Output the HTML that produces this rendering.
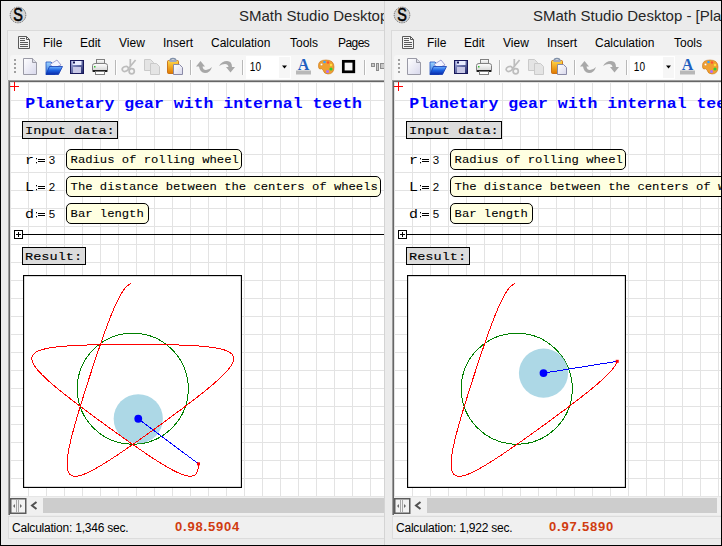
<!DOCTYPE html>
<html><head><meta charset="utf-8"><style>
*{margin:0;padding:0;box-sizing:border-box}
html,body{width:722px;height:546px;overflow:hidden;background:#ebebeb}
body{position:relative;font-family:"Liberation Sans",sans-serif}
.frame{position:absolute;left:0;top:0;width:722px;height:546px;border:1px solid #000}
.win{position:absolute;top:0;height:546px;overflow:hidden;background:#ebebeb}
.sepv{position:absolute;left:0;top:0;width:1px;height:546px;background:#d4d4d4}
.logo{position:absolute;left:8px;top:5px;width:20px;height:20px}
.logo svg{position:absolute;left:0;top:0}
.title{position:absolute;top:7px;font-size:15px;color:#262626;white-space:nowrap}
.menubar{position:absolute;left:7px;top:30px;right:0;height:50px;background:#f0f0f0;border-top:1px solid #dadada;border-left:1px solid #dadada}
.menu span{position:absolute;top:36px;font-size:12px;color:#000}
.toolbar{position:absolute;left:10px;top:55px;right:0;height:25px;background:#f6f6f6;border-radius:3px 0 0 0}
.bl1{position:absolute;left:8px;top:80px;width:1px;height:435px;background:#9c9c9c}
.bl2{position:absolute;left:9px;top:81px;width:1px;height:434px;background:#666}
.bt1{position:absolute;left:8px;top:80px;right:0;height:1px;background:#9c9c9c}
.bt2{position:absolute;left:9px;top:81px;right:0;height:1px;background:#666}
.doc{position:absolute;left:10px;top:82px;right:0;height:414px;background:#fff;overflow:hidden}
.dc{position:absolute;left:-10px;top:-82px;width:800px;height:700px}
.grid{position:absolute;left:0;top:0;width:800px;height:700px;background-image:linear-gradient(to right,#e3e3e3 1px,transparent 1px),linear-gradient(to bottom,#e3e3e3 1px,transparent 1px);background-size:18px 18px;background-position:10px 10px}
.h1{position:absolute;left:25.3px;top:95.7px;font-family:"Liberation Mono",monospace;font-weight:bold;font-size:16.5px;line-height:16.5px;color:#0000ff;white-space:nowrap;transform:scaleY(0.85);transform-origin:0 12.3px}
.lbl{position:absolute;left:22px;height:18px;background:#dcdcdc;border:1px solid #000}
.lt{position:absolute;left:25px;font-family:"Liberation Mono",monospace;font-size:13.6px;line-height:13.6px;white-space:nowrap;transform:scaleY(0.82);transform-origin:0 10.2px;-webkit-text-stroke:0.12px #000}
.vn{position:absolute;left:25px;font-family:"Liberation Mono",monospace;font-size:13.33px;line-height:13.33px;transform:scale(1.12,0.93);transform-origin:0 10px;white-space:nowrap}
.vc{position:absolute;left:36px;width:1px;height:5px;border-top:1px solid #000;border-bottom:1px solid #000}
.ve{position:absolute;left:38px;width:7px;height:3.5px;border-top:1.2px solid #000;border-bottom:1.2px solid #000}
.vv{position:absolute;left:48.8px;font-family:"Liberation Sans",sans-serif;font-size:11.5px;line-height:11px}
.cmt{position:absolute;left:66px;height:21px;background:#ffffe1;border:1px solid #000;border-radius:5px}
.ct{position:absolute;left:70.6px;font-family:"Liberation Mono",monospace;font-size:12.2px;line-height:12.2px;white-space:nowrap;transform:scaleY(0.92);transform-origin:0 9.15px;-webkit-text-stroke:0.08px #000}
.sepline{position:absolute;left:23px;width:700px;top:234px;height:1px;background:#000}
.hscroll{position:absolute;left:10px;top:496px;right:0;height:19px;background:#f0f0f0;border-top:1px solid #e6e6e6}
.track{position:absolute;left:43px;top:498px;height:15px;background:#cdcdcd}
.status{position:absolute;left:8px;top:516px;right:0;height:23px;background:#f0f0f0;border-top:1px solid #dcdcdc;border-left:1px solid #dcdcdc;border-bottom:1px solid #dcdcdc}
.calc{position:absolute;left:12px;top:521px;font-size:12px;letter-spacing:-0.22px;white-space:nowrap;color:#000}
.ver{position:absolute;top:519px;font-weight:bold;color:#d03c10;font-size:13px;letter-spacing:0.8px;white-space:nowrap}
</style></head><body>

<div class="win" style="left:0px;width:384px">
  <div class="logo"><svg width="20" height="20"><circle cx="10" cy="10" r="7.8" fill="#d6d6d6" stroke="#6a6a6a" stroke-width="1" stroke-dasharray="1.4 0.9"/><text x="0" y="0" transform="translate(10,16.1) scale(0.82,1)" text-anchor="middle" font-family="Liberation Sans" font-size="17.5" fill="#000" stroke="#000" stroke-width="0.6">S</text></svg></div>
  <div class="title" style="left:239px">SMath Studio Desktop - [Planetary gear with internal teeth]</div>
  <div class="menubar"></div>
  <svg width="14" height="15" style="position:absolute;left:17px;top:35px;z-index:1">
<path d="M1.5,1.5 H9.5 L12.5,4.5 V13.5 H1.5 Z" fill="#f4f4f4" stroke="#5a5a5a"/>
<path d="M9.5,1.5 V4.5 H12.5" fill="none" stroke="#5a5a5a"/>
<g fill="#5a5a5a"><rect x="3" y="3" width="5" height="1"/><rect x="3" y="5" width="5" height="1"/><rect x="3" y="7" width="8" height="1"/><rect x="3" y="9" width="8" height="1"/><rect x="3" y="11" width="8" height="1"/></g>
</svg>
  <div class="menu"><span style="left:43px">File</span><span style="left:80px">Edit</span><span style="left:119px">View</span><span style="left:163px">Insert</span><span style="left:211px">Calculation</span><span style="left:290px">Tools</span><span style="left:338px;letter-spacing:-0.55px">Pages</span></div>
  <div class="toolbar"></div>
  <svg class="tb" width="384" height="26" style="position:absolute;left:0;top:55px">
<defs>
<linearGradient id="pg" x1="0" y1="0" x2="1" y2="1"><stop offset="0" stop-color="#ffffff"/><stop offset="1" stop-color="#d8d8ec"/></linearGradient>
<linearGradient id="fb" x1="0" y1="0" x2="0" y2="1"><stop offset="0" stop-color="#6fb0ff"/><stop offset="0.5" stop-color="#1a5fe0"/><stop offset="1" stop-color="#0a2aa8"/></linearGradient>
<linearGradient id="fl" x1="0" y1="0" x2="0" y2="1"><stop offset="0" stop-color="#9dd4ff"/><stop offset="1" stop-color="#2a6ad8"/></linearGradient>
<linearGradient id="sv" x1="0" y1="0" x2="1" y2="1"><stop offset="0" stop-color="#a8b0e0"/><stop offset="1" stop-color="#20286a"/></linearGradient>
<linearGradient id="cb" x1="0" y1="0" x2="0" y2="1"><stop offset="0" stop-color="#ffd84a"/><stop offset="1" stop-color="#e07800"/></linearGradient>
<linearGradient id="pr" x1="0" y1="0" x2="0" y2="1"><stop offset="0" stop-color="#ffffff"/><stop offset="1" stop-color="#d0d0d0"/></linearGradient>
</defs>
<!-- grip -->
<g fill="#a0a0a0"><rect x="14" y="4" width="2" height="2"/><rect x="14" y="8" width="2" height="2"/><rect x="14" y="12" width="2" height="2"/><rect x="14" y="16" width="2" height="2"/></g>
<!-- new -->
<path d="M23.5,3.5 H32.5 L36.5,7.5 V19.5 H23.5 Z" fill="url(#pg)" stroke="#9a9aa6"/>
<path d="M32.5,3.5 V7.5 H36.5" fill="#dcdce6" stroke="#9a9aa6"/>
<!-- open -->
<path d="M46,7 H51 L52.5,8.5 H55 V19.5 H46 Z" fill="url(#fl)" stroke="#2050c0" stroke-width="0.8"/>
<path d="M50,9.5 L57,5 L61,10 L54,13 Z" fill="#f4f4ff" stroke="#8080c0" stroke-width="0.7"/>
<path d="M46,19.5 L49.5,11.5 H62.5 L58.5,19.5 Z" fill="url(#fb)" stroke="#1038b0" stroke-width="0.8"/>
<!-- save -->
<rect x="70.5" y="5.5" width="13" height="13" fill="url(#sv)" stroke="#18185a"/>
<rect x="72.5" y="6" width="9" height="4" fill="#e8ecff"/>
<rect x="73" y="12" width="8" height="6" fill="#c8c8e6"/>
<rect x="73" y="6.5" width="2" height="2" fill="#18185a"/>
<!-- print -->
<rect x="96.5" y="4.5" width="8" height="5" fill="url(#pr)" stroke="#808080"/>
<path d="M92.5,10.5 Q92.5,8.5 95,8.5 H105 Q107.5,8.5 107.5,10.5 V16.5 H92.5 Z" fill="url(#pr)" stroke="#808080"/>
<rect x="93" y="15" width="14" height="2" fill="#202020"/>
<rect x="95.5" y="16.5" width="9" height="3" fill="#fff" stroke="#808080"/>
<rect x="94" y="11" width="1.5" height="1.5" fill="#30c030"/>
<!-- sep -->
<rect x="115" y="5" width="1" height="15" fill="#b8b8b8"/><rect x="116" y="5" width="1" height="15" fill="#fff"/>
<!-- cut -->
<g fill="none" stroke="#bdbdbd" stroke-width="1.7">
<ellipse cx="125.3" cy="13.9" rx="3.2" ry="2.3" transform="rotate(-25 125.3 13.9)"/><circle cx="131.7" cy="16.3" r="2.6"/>
<path d="M130.3,4 V12.5 M135.6,5 L128.5,13.5"/></g>
<!-- copy -->
<path d="M144.5,4.5 H150.5 L153.5,7.5 V15.5 H144.5 Z" fill="#e4e4e4" stroke="#cacaca"/>
<path d="M150.5,8.5 H156.5 L159.5,11.5 V19.5 H150.5 Z" fill="#e4e4e4" stroke="#cacaca"/>
<!-- paste -->
<rect x="167.5" y="5.5" width="11" height="13" rx="1" fill="url(#cb)" stroke="#c06000" stroke-width="0.8"/>
<path d="M170,6 Q170,3.5 173,3.5 Q176,3.5 176,6" fill="none" stroke="#8090a8" stroke-width="1.3"/>
<rect x="169.5" y="5" width="7" height="2" fill="#a0a8c0"/>
<path d="M173.5,9.5 H179.5 L182.5,12.5 V19.5 H173.5 Z" fill="url(#pg)" stroke="#8a8aa6"/>
<!-- sep -->
<rect x="190" y="5" width="1" height="15" fill="#b8b8b8"/><rect x="191" y="5" width="1" height="15" fill="#fff"/>
<!-- undo -->
<path d="M196,11.5 L200.5,6 L205,11.5 H202.5 Q203,15 206,15 Q209,15 212,12 Q210,18 205,18 Q200,18 199,11.5 Z" fill="#a8a8a8"/>
<!-- redo -->
<path d="M219,11 Q222,6 227,6 Q232,6 232,12 H235 L230.5,17.5 L226,12 H228.5 Q228,9 225,9 Q222,9 219,11 Z" fill="#a8a8a8"/>
<!-- sep -->
<rect x="242" y="5" width="1" height="15" fill="#b8b8b8"/><rect x="243" y="5" width="1" height="15" fill="#fff"/>
<!-- combo -->
<rect x="246" y="1" width="45" height="23" fill="#ffffff"/>
<rect x="279" y="2" width="11" height="21" fill="#f6f6f6"/>
<path d="M282,10.5 H287 L284.5,13.5 Z" fill="#000"/>
<text x="249.8" y="15.7" font-family="Liberation Sans" font-size="12.5" textLength="11.2" lengthAdjust="spacingAndGlyphs" fill="#000">10</text>
<!-- A -->
<rect x="296" y="15.5" width="15" height="4" fill="#b8b8b8"/>
<text x="303.5" y="15.2" text-anchor="middle" font-family="Liberation Serif" font-weight="bold" font-size="16" fill="#1f5fbf">A</text>
<!-- palette -->
<path d="M318.5,11 Q318,5 326,5 Q334,5 334,12 Q334,19 328,19 Q324,19 323,15 Q322,13 320,14 Q318.5,14 318.5,11 Z" fill="#f0a030" stroke="#c87010" stroke-width="0.6"/>
<circle cx="321.5" cy="9.5" r="1.2" fill="#fff" stroke="#c87010" stroke-width="0.4"/>
<circle cx="324.5" cy="7" r="1.3" fill="#3aa0ff"/><circle cx="328" cy="7.5" r="1.2" fill="#ff5030"/>
<circle cx="331" cy="10" r="1.2" fill="#ffe040"/><circle cx="331" cy="14" r="1.6" fill="#30d030"/><circle cx="327.5" cy="16.5" r="1.5" fill="#b070ff"/>
<!-- box -->
<rect x="343.3" y="6.3" width="10.5" height="10.5" fill="none" stroke="#000" stroke-width="2.7"/>
<!-- sep -->
<rect x="364" y="5" width="1" height="15" fill="#b8b8b8"/><rect x="365" y="5" width="1" height="15" fill="#fff"/>
<!-- align -->
<rect x="371.5" y="8.5" width="3" height="3" fill="#c8c8c8" stroke="#8c8c8c"/>
<rect x="376.5" y="8.5" width="2" height="7" fill="#c8c8c8" stroke="#8c8c8c"/>
<rect x="380.5" y="8.5" width="4" height="5" fill="#c8c8c8" stroke="#8c8c8c"/>
</svg>
  <div class="bl1"></div><div class="bl2"></div><div class="bt1"></div><div class="bt2"></div>
  <div class="doc"><div class="dc">
    <div class="grid"></div>
    <svg style="position:absolute;left:10px;top:82px" width="9" height="9"><rect x="0" y="4" width="9" height="1" fill="#f00"/><rect x="4" y="0" width="1" height="9" fill="#f00"/></svg>
    <div class="h1">Planetary gear with internal teeth</div>
    <div class="lbl" style="top:121px;width:96px"></div><div class="lt" style="top:124px">Input data:</div>
    <div class="vn" style="top:154px">r</div><svg style="position:absolute;left:35px;top:157px" width="11" height="8"><rect x="1" y="1" width="1" height="1.3" fill="#000"/><rect x="1" y="5" width="1" height="1.3" fill="#000"/><rect x="3" y="2" width="7" height="1" fill="#000"/><rect x="3" y="4" width="7" height="1" fill="#000"/></svg><div class="vv" style="top:155px">3</div>
    <div class="cmt" style="top:149px;width:176px"></div><div class="ct" style="top:153.80px">Radius of rolling wheel</div>
    <div class="vn" style="top:181px">L</div><svg style="position:absolute;left:35px;top:184px" width="11" height="8"><rect x="1" y="1" width="1" height="1.3" fill="#000"/><rect x="1" y="5" width="1" height="1.3" fill="#000"/><rect x="3" y="2" width="7" height="1" fill="#000"/><rect x="3" y="4" width="7" height="1" fill="#000"/></svg><div class="vv" style="top:182px">2</div>
    <div class="cmt" style="top:176px;width:315px"></div><div class="ct" style="top:180.80px">The distance between the centers of wheels</div>
    <div class="vn" style="top:208px">d</div><svg style="position:absolute;left:35px;top:211px" width="11" height="8"><rect x="1" y="1" width="1" height="1.3" fill="#000"/><rect x="1" y="5" width="1" height="1.3" fill="#000"/><rect x="3" y="2" width="7" height="1" fill="#000"/><rect x="3" y="4" width="7" height="1" fill="#000"/></svg><div class="vv" style="top:209px">5</div>
    <div class="cmt" style="top:203px;width:83px"></div><div class="ct" style="top:207.80px">Bar length</div>
    <svg style="position:absolute;left:14px;top:230px" width="9" height="9"><rect x="0.5" y="0.5" width="8" height="8" fill="#fff" stroke="#000"/><rect x="2" y="4" width="5" height="1" fill="#000"/><rect x="4" y="2" width="1" height="5" fill="#000"/></svg>
    <div class="sepline"></div>
    <div class="lbl" style="top:247px;width:64px"></div><div class="lt" style="top:250px">Result:</div>
    <svg width="219" height="213" style="position:absolute;left:23px;top:275px">
<rect x="0.5" y="0.5" width="218" height="212" fill="#fff" stroke="#000" stroke-width="1.3"/>
<circle cx="109.75" cy="113.70" r="55.5" fill="none" stroke="#008000" stroke-width="1" shape-rendering="crispEdges"/>
<circle cx="115.27" cy="143.74" r="24.6" fill="#add8e6"/>
<path d="M108.02,8.75 L107.33,8.99 L106.64,9.30 L105.94,9.68 L105.24,10.15 L104.54,10.69 L103.84,11.31 L103.14,12.00 L102.43,12.77 L101.72,13.61 L101.00,14.53 L100.29,15.51 L99.56,16.57 L98.84,17.71 L98.10,18.91 L97.37,20.18 L96.62,21.51 L95.88,22.92 L95.12,24.39 L94.36,25.92 L93.60,27.52 L92.83,29.18 L92.05,30.90 L91.27,32.67 L90.48,34.51 L89.69,36.40 L88.89,38.34 L88.08,40.34 L87.27,42.39 L86.45,44.48 L85.63,46.63 L84.80,48.82 L83.97,51.05 L83.13,53.32 L82.28,55.64 L81.43,57.99 L80.58,60.37 L79.72,62.80 L78.86,65.25 L77.99,67.73 L77.12,70.24 L76.25,72.78 L75.37,75.34 L74.50,77.92 L73.62,80.52 L72.74,83.14 L71.86,85.77 L70.98,88.41 L70.10,91.07 L69.22,93.74 L68.35,96.41 L67.47,99.08 L66.60,101.76 L65.74,104.44 L64.88,107.12 L64.02,109.79 L63.17,112.45 L62.33,115.11 L61.49,117.76 L60.66,120.39 L59.85,123.01 L59.04,125.62 L58.24,128.20 L57.46,130.77 L56.68,133.31 L55.93,135.83 L55.18,138.32 L54.45,140.78 L53.74,143.21 L53.05,145.62 L52.37,147.98 L51.71,150.32 L51.08,152.61 L50.46,154.87 L49.87,157.09 L49.30,159.27 L48.75,161.40 L48.23,163.49 L47.73,165.53 L47.26,167.53 L46.82,169.48 L46.41,171.37 L46.03,173.22 L45.68,175.01 L45.36,176.76 L45.07,178.44 L44.81,180.07 L44.59,181.65 L44.41,183.17 L44.26,184.63 L44.14,186.03 L44.07,187.37 L44.03,188.66 L44.03,189.88 L44.07,191.04 L44.15,192.14 L44.27,193.18 L44.43,194.15 L44.64,195.06 L44.89,195.91 L45.18,196.70 L45.51,197.42 L45.89,198.08 L46.31,198.67 L46.78,199.21 L47.29,199.68 L47.85,200.08 L48.46,200.43 L49.11,200.71 L49.81,200.92 L50.55,201.08 L51.34,201.17 L52.18,201.21 L53.06,201.18 L53.99,201.09 L54.97,200.95 L55.99,200.74 L57.06,200.48 L58.18,200.16 L59.34,199.78 L60.55,199.35 L61.80,198.86 L63.10,198.32 L64.44,197.73 L65.83,197.08 L67.26,196.38 L68.73,195.64 L70.25,194.84 L71.81,194.00 L73.41,193.11 L75.04,192.18 L76.72,191.20 L78.44,190.18 L80.19,189.11 L81.98,188.01 L83.81,186.87 L85.67,185.69 L87.56,184.48 L89.49,183.23 L91.44,181.94 L93.43,180.63 L95.45,179.28 L97.49,177.91 L99.56,176.50 L101.65,175.07 L103.77,173.62 L105.91,172.14 L108.07,170.64 L110.25,169.12 L112.45,167.58 L114.66,166.03 L116.88,164.45 L119.12,162.87 L121.37,161.27 L123.63,159.65 L125.90,158.03 L128.17,156.40 L130.45,154.76 L132.73,153.11 L135.01,151.46 L137.29,149.80 L139.56,148.15 L141.83,146.49 L144.09,144.83 L146.35,143.17 L148.59,141.52 L150.83,139.87 L153.04,138.22 L155.24,136.58 L157.43,134.95 L159.59,133.33 L161.74,131.72 L163.85,130.11 L165.95,128.52 L168.01,126.94 L170.05,125.38 L172.06,123.83 L174.03,122.29 L175.97,120.78 L177.87,119.28 L179.74,117.79 L181.56,116.33 L183.35,114.88 L185.09,113.46 L186.78,112.05 L188.43,110.67 L190.04,109.31 L191.59,107.97 L193.09,106.65 L194.54,105.36 L195.93,104.09 L197.27,102.84 L198.56,101.62 L199.78,100.43 L200.95,99.26 L202.05,98.11 L203.09,96.99 L204.07,95.90 L204.99,94.83 L205.84,93.79 L206.63,92.77 L207.34,91.79 L207.99,90.82 L208.57,89.89 L209.09,88.98 L209.53,88.09 L209.90,87.23 L210.20,86.40 L210.42,85.59 L210.58,84.81 L210.66,84.06 L210.67,83.33 L210.60,82.62 L210.46,81.94 L210.25,81.28 L209.96,80.65 L209.60,80.04 L209.16,79.45 L208.65,78.89 L208.07,78.35 L207.41,77.83 L206.68,77.33 L205.88,76.86 L205.00,76.40 L204.05,75.96 L203.03,75.55 L201.94,75.15 L200.78,74.77 L199.54,74.41 L198.24,74.07 L196.88,73.74 L195.44,73.44 L193.94,73.14 L192.37,72.87 L190.74,72.60 L189.05,72.36 L187.29,72.12 L185.48,71.90 L183.60,71.70 L181.67,71.50 L179.68,71.32 L177.64,71.15 L175.54,70.99 L173.39,70.84 L171.20,70.70 L168.95,70.57 L166.66,70.45 L164.32,70.34 L161.94,70.23 L159.52,70.14 L157.06,70.05 L154.56,69.97 L152.02,69.89 L149.45,69.82 L146.85,69.76 L144.23,69.70 L141.57,69.65 L138.89,69.61 L136.18,69.57 L133.46,69.53 L130.71,69.50 L127.95,69.47 L125.18,69.45 L122.39,69.43 L119.59,69.41 L116.78,69.40 L113.97,69.40 L111.16,69.39 L108.34,69.39 L105.53,69.40 L102.72,69.40 L99.91,69.41 L97.11,69.43 L94.32,69.45 L91.55,69.47 L88.79,69.50 L86.04,69.53 L83.32,69.57 L80.61,69.61 L77.93,69.65 L75.27,69.70 L72.65,69.76 L70.05,69.82 L67.48,69.89 L64.94,69.97 L62.44,70.05 L59.98,70.14 L57.56,70.23 L55.18,70.34 L52.84,70.45 L50.55,70.57 L48.30,70.70 L46.11,70.84 L43.96,70.99 L41.86,71.15 L39.82,71.32 L37.83,71.50 L35.90,71.70 L34.02,71.90 L32.21,72.12 L30.45,72.36 L28.76,72.60 L27.13,72.87 L25.56,73.14 L24.06,73.44 L22.62,73.74 L21.26,74.07 L19.96,74.41 L18.72,74.77 L17.56,75.15 L16.47,75.55 L15.45,75.96 L14.50,76.40 L13.62,76.86 L12.82,77.33 L12.09,77.83 L11.43,78.35 L10.85,78.89 L10.34,79.45 L9.90,80.04 L9.54,80.65 L9.25,81.28 L9.04,81.94 L8.90,82.62 L8.83,83.33 L8.84,84.06 L8.92,84.81 L9.08,85.59 L9.30,86.40 L9.60,87.23 L9.97,88.09 L10.41,88.98 L10.93,89.89 L11.51,90.82 L12.16,91.79 L12.87,92.77 L13.66,93.79 L14.51,94.83 L15.43,95.90 L16.41,96.99 L17.45,98.11 L18.55,99.26 L19.72,100.43 L20.94,101.62 L22.23,102.84 L23.57,104.09 L24.96,105.36 L26.41,106.65 L27.91,107.97 L29.46,109.31 L31.07,110.67 L32.72,112.05 L34.41,113.46 L36.15,114.88 L37.94,116.33 L39.76,117.79 L41.63,119.28 L43.53,120.78 L45.47,122.29 L47.44,123.83 L49.45,125.38 L51.49,126.94 L53.55,128.52 L55.65,130.11 L57.76,131.72 L59.91,133.33 L62.07,134.95 L64.26,136.58 L66.46,138.22 L68.67,139.87 L70.91,141.52 L73.15,143.17 L75.41,144.83 L77.67,146.49 L79.94,148.15 L82.21,149.80 L84.49,151.46 L86.77,153.11 L89.05,154.76 L91.33,156.40 L93.60,158.03 L95.87,159.65 L98.13,161.27 L100.38,162.87 L102.62,164.45 L104.84,166.03 L107.05,167.58 L109.25,169.12 L111.43,170.64 L113.59,172.14 L115.73,173.62 L117.85,175.07 L119.94,176.50 L122.01,177.91 L124.05,179.28 L126.07,180.63 L128.06,181.94 L130.01,183.23 L131.94,184.48 L133.83,185.69 L135.69,186.87 L137.52,188.01 L139.31,189.11 L141.06,190.18 L142.78,191.20 L144.46,192.18 L146.09,193.11 L147.69,194.00 L149.25,194.84 L150.77,195.64 L152.24,196.38 L153.67,197.08 L155.06,197.73 L156.40,198.32 L157.70,198.86 L158.95,199.35 L160.16,199.78 L161.32,200.16 L162.44,200.48 L163.51,200.74 L164.53,200.95 L165.51,201.09 L166.44,201.18 L167.32,201.21 L168.16,201.17 L168.95,201.08 L169.69,200.92 L170.39,200.71 L171.04,200.43 L171.65,200.08 L172.21,199.68 L172.72,199.21 L173.19,198.67 L173.61,198.08 L173.99,197.42 L174.32,196.70 L174.61,195.91 L174.86,195.06 L175.07,194.15 L175.23,193.18 L175.35,192.14 L175.43,191.04 L175.47,189.88 L175.47,188.84" fill="none" stroke="#ff0000" stroke-width="1" shape-rendering="crispEdges"/>
<line x1="115.27" y1="143.74" x2="175.47" y2="188.84" stroke="#0000ff" stroke-width="1" shape-rendering="crispEdges"/>
<circle cx="115.27" cy="143.74" r="3.9" fill="#0000ff"/>
<rect x="173.97" y="187.34" width="3" height="3" fill="#ff0000"/>
</svg>
  </div></div>
  <div class="hscroll"></div>
  <svg style="position:absolute;left:10px;top:498px" width="17" height="16">
    <rect x="0.75" y="0.75" width="15" height="14.5" fill="#f2f2f2" stroke="#5c5c5c" stroke-width="1.5"/>
    <rect x="6" y="1.5" width="1" height="13" fill="#a8a8a8"/><rect x="8" y="1.5" width="1" height="13" fill="#a8a8a8"/>
    <path d="M3,8 L5,6 V10 Z" fill="#6a6a6a"/><path d="M12,8 L10,6 V10 Z" fill="#6a6a6a"/>
  </svg>
  <svg style="position:absolute;left:30px;top:501px" width="9" height="9"><path d="M6.5,1 L2,4.5 L6.5,8" fill="none" stroke="#505050" stroke-width="2"/></svg>
  <div class="track" style="right:0px"></div>
  <div class="status"></div>
  <span class="calc" style="width:116px">Calculation: 1,346 sec.</span><span class="ver" style="left:175px">0.98.5904</span>
  <div class="sepv"></div>
</div>

<div class="win" style="left:384px;width:338px">
  <div class="logo"><svg width="20" height="20"><circle cx="10" cy="10" r="7.8" fill="#d6d6d6" stroke="#6a6a6a" stroke-width="1" stroke-dasharray="1.4 0.9"/><text x="0" y="0" transform="translate(10,16.1) scale(0.82,1)" text-anchor="middle" font-family="Liberation Sans" font-size="17.5" fill="#000" stroke="#000" stroke-width="0.6">S</text></svg></div>
  <div class="title" style="left:149px">SMath Studio Desktop - [Planetary gear with internal teeth]</div>
  <div class="menubar"></div>
  <svg width="14" height="15" style="position:absolute;left:17px;top:35px;z-index:1">
<path d="M1.5,1.5 H9.5 L12.5,4.5 V13.5 H1.5 Z" fill="#f4f4f4" stroke="#5a5a5a"/>
<path d="M9.5,1.5 V4.5 H12.5" fill="none" stroke="#5a5a5a"/>
<g fill="#5a5a5a"><rect x="3" y="3" width="5" height="1"/><rect x="3" y="5" width="5" height="1"/><rect x="3" y="7" width="8" height="1"/><rect x="3" y="9" width="8" height="1"/><rect x="3" y="11" width="8" height="1"/></g>
</svg>
  <div class="menu"><span style="left:43px">File</span><span style="left:80px">Edit</span><span style="left:119px">View</span><span style="left:163px">Insert</span><span style="left:211px">Calculation</span><span style="left:290px">Tools</span><span style="left:338px;letter-spacing:-0.55px">Pages</span></div>
  <div class="toolbar"></div>
  <svg class="tb" width="384" height="26" style="position:absolute;left:0;top:55px">
<defs>
<linearGradient id="pg" x1="0" y1="0" x2="1" y2="1"><stop offset="0" stop-color="#ffffff"/><stop offset="1" stop-color="#d8d8ec"/></linearGradient>
<linearGradient id="fb" x1="0" y1="0" x2="0" y2="1"><stop offset="0" stop-color="#6fb0ff"/><stop offset="0.5" stop-color="#1a5fe0"/><stop offset="1" stop-color="#0a2aa8"/></linearGradient>
<linearGradient id="fl" x1="0" y1="0" x2="0" y2="1"><stop offset="0" stop-color="#9dd4ff"/><stop offset="1" stop-color="#2a6ad8"/></linearGradient>
<linearGradient id="sv" x1="0" y1="0" x2="1" y2="1"><stop offset="0" stop-color="#a8b0e0"/><stop offset="1" stop-color="#20286a"/></linearGradient>
<linearGradient id="cb" x1="0" y1="0" x2="0" y2="1"><stop offset="0" stop-color="#ffd84a"/><stop offset="1" stop-color="#e07800"/></linearGradient>
<linearGradient id="pr" x1="0" y1="0" x2="0" y2="1"><stop offset="0" stop-color="#ffffff"/><stop offset="1" stop-color="#d0d0d0"/></linearGradient>
</defs>
<!-- grip -->
<g fill="#a0a0a0"><rect x="14" y="4" width="2" height="2"/><rect x="14" y="8" width="2" height="2"/><rect x="14" y="12" width="2" height="2"/><rect x="14" y="16" width="2" height="2"/></g>
<!-- new -->
<path d="M23.5,3.5 H32.5 L36.5,7.5 V19.5 H23.5 Z" fill="url(#pg)" stroke="#9a9aa6"/>
<path d="M32.5,3.5 V7.5 H36.5" fill="#dcdce6" stroke="#9a9aa6"/>
<!-- open -->
<path d="M46,7 H51 L52.5,8.5 H55 V19.5 H46 Z" fill="url(#fl)" stroke="#2050c0" stroke-width="0.8"/>
<path d="M50,9.5 L57,5 L61,10 L54,13 Z" fill="#f4f4ff" stroke="#8080c0" stroke-width="0.7"/>
<path d="M46,19.5 L49.5,11.5 H62.5 L58.5,19.5 Z" fill="url(#fb)" stroke="#1038b0" stroke-width="0.8"/>
<!-- save -->
<rect x="70.5" y="5.5" width="13" height="13" fill="url(#sv)" stroke="#18185a"/>
<rect x="72.5" y="6" width="9" height="4" fill="#e8ecff"/>
<rect x="73" y="12" width="8" height="6" fill="#c8c8e6"/>
<rect x="73" y="6.5" width="2" height="2" fill="#18185a"/>
<!-- print -->
<rect x="96.5" y="4.5" width="8" height="5" fill="url(#pr)" stroke="#808080"/>
<path d="M92.5,10.5 Q92.5,8.5 95,8.5 H105 Q107.5,8.5 107.5,10.5 V16.5 H92.5 Z" fill="url(#pr)" stroke="#808080"/>
<rect x="93" y="15" width="14" height="2" fill="#202020"/>
<rect x="95.5" y="16.5" width="9" height="3" fill="#fff" stroke="#808080"/>
<rect x="94" y="11" width="1.5" height="1.5" fill="#30c030"/>
<!-- sep -->
<rect x="115" y="5" width="1" height="15" fill="#b8b8b8"/><rect x="116" y="5" width="1" height="15" fill="#fff"/>
<!-- cut -->
<g fill="none" stroke="#bdbdbd" stroke-width="1.7">
<ellipse cx="125.3" cy="13.9" rx="3.2" ry="2.3" transform="rotate(-25 125.3 13.9)"/><circle cx="131.7" cy="16.3" r="2.6"/>
<path d="M130.3,4 V12.5 M135.6,5 L128.5,13.5"/></g>
<!-- copy -->
<path d="M144.5,4.5 H150.5 L153.5,7.5 V15.5 H144.5 Z" fill="#e4e4e4" stroke="#cacaca"/>
<path d="M150.5,8.5 H156.5 L159.5,11.5 V19.5 H150.5 Z" fill="#e4e4e4" stroke="#cacaca"/>
<!-- paste -->
<rect x="167.5" y="5.5" width="11" height="13" rx="1" fill="url(#cb)" stroke="#c06000" stroke-width="0.8"/>
<path d="M170,6 Q170,3.5 173,3.5 Q176,3.5 176,6" fill="none" stroke="#8090a8" stroke-width="1.3"/>
<rect x="169.5" y="5" width="7" height="2" fill="#a0a8c0"/>
<path d="M173.5,9.5 H179.5 L182.5,12.5 V19.5 H173.5 Z" fill="url(#pg)" stroke="#8a8aa6"/>
<!-- sep -->
<rect x="190" y="5" width="1" height="15" fill="#b8b8b8"/><rect x="191" y="5" width="1" height="15" fill="#fff"/>
<!-- undo -->
<path d="M196,11.5 L200.5,6 L205,11.5 H202.5 Q203,15 206,15 Q209,15 212,12 Q210,18 205,18 Q200,18 199,11.5 Z" fill="#a8a8a8"/>
<!-- redo -->
<path d="M219,11 Q222,6 227,6 Q232,6 232,12 H235 L230.5,17.5 L226,12 H228.5 Q228,9 225,9 Q222,9 219,11 Z" fill="#a8a8a8"/>
<!-- sep -->
<rect x="242" y="5" width="1" height="15" fill="#b8b8b8"/><rect x="243" y="5" width="1" height="15" fill="#fff"/>
<!-- combo -->
<rect x="246" y="1" width="45" height="23" fill="#ffffff"/>
<rect x="279" y="2" width="11" height="21" fill="#f6f6f6"/>
<path d="M282,10.5 H287 L284.5,13.5 Z" fill="#000"/>
<text x="249.8" y="15.7" font-family="Liberation Sans" font-size="12.5" textLength="11.2" lengthAdjust="spacingAndGlyphs" fill="#000">10</text>
<!-- A -->
<rect x="296" y="15.5" width="15" height="4" fill="#b8b8b8"/>
<text x="303.5" y="15.2" text-anchor="middle" font-family="Liberation Serif" font-weight="bold" font-size="16" fill="#1f5fbf">A</text>
<!-- palette -->
<path d="M318.5,11 Q318,5 326,5 Q334,5 334,12 Q334,19 328,19 Q324,19 323,15 Q322,13 320,14 Q318.5,14 318.5,11 Z" fill="#f0a030" stroke="#c87010" stroke-width="0.6"/>
<circle cx="321.5" cy="9.5" r="1.2" fill="#fff" stroke="#c87010" stroke-width="0.4"/>
<circle cx="324.5" cy="7" r="1.3" fill="#3aa0ff"/><circle cx="328" cy="7.5" r="1.2" fill="#ff5030"/>
<circle cx="331" cy="10" r="1.2" fill="#ffe040"/><circle cx="331" cy="14" r="1.6" fill="#30d030"/><circle cx="327.5" cy="16.5" r="1.5" fill="#b070ff"/>
<!-- box -->
<rect x="343.3" y="6.3" width="10.5" height="10.5" fill="none" stroke="#000" stroke-width="2.7"/>
<!-- sep -->
<rect x="364" y="5" width="1" height="15" fill="#b8b8b8"/><rect x="365" y="5" width="1" height="15" fill="#fff"/>
<!-- align -->
<rect x="371.5" y="8.5" width="3" height="3" fill="#c8c8c8" stroke="#8c8c8c"/>
<rect x="376.5" y="8.5" width="2" height="7" fill="#c8c8c8" stroke="#8c8c8c"/>
<rect x="380.5" y="8.5" width="4" height="5" fill="#c8c8c8" stroke="#8c8c8c"/>
</svg>
  <div class="bl1"></div><div class="bl2"></div><div class="bt1"></div><div class="bt2"></div>
  <div class="doc"><div class="dc">
    <div class="grid"></div>
    <svg style="position:absolute;left:10px;top:82px" width="9" height="9"><rect x="0" y="4" width="9" height="1" fill="#f00"/><rect x="4" y="0" width="1" height="9" fill="#f00"/></svg>
    <div class="h1">Planetary gear with internal teeth</div>
    <div class="lbl" style="top:121px;width:96px"></div><div class="lt" style="top:124px">Input data:</div>
    <div class="vn" style="top:154px">r</div><svg style="position:absolute;left:35px;top:157px" width="11" height="8"><rect x="1" y="1" width="1" height="1.3" fill="#000"/><rect x="1" y="5" width="1" height="1.3" fill="#000"/><rect x="3" y="2" width="7" height="1" fill="#000"/><rect x="3" y="4" width="7" height="1" fill="#000"/></svg><div class="vv" style="top:155px">3</div>
    <div class="cmt" style="top:149px;width:176px"></div><div class="ct" style="top:153.80px">Radius of rolling wheel</div>
    <div class="vn" style="top:181px">L</div><svg style="position:absolute;left:35px;top:184px" width="11" height="8"><rect x="1" y="1" width="1" height="1.3" fill="#000"/><rect x="1" y="5" width="1" height="1.3" fill="#000"/><rect x="3" y="2" width="7" height="1" fill="#000"/><rect x="3" y="4" width="7" height="1" fill="#000"/></svg><div class="vv" style="top:182px">2</div>
    <div class="cmt" style="top:176px;width:315px"></div><div class="ct" style="top:180.80px">The distance between the centers of wheels</div>
    <div class="vn" style="top:208px">d</div><svg style="position:absolute;left:35px;top:211px" width="11" height="8"><rect x="1" y="1" width="1" height="1.3" fill="#000"/><rect x="1" y="5" width="1" height="1.3" fill="#000"/><rect x="3" y="2" width="7" height="1" fill="#000"/><rect x="3" y="4" width="7" height="1" fill="#000"/></svg><div class="vv" style="top:209px">5</div>
    <div class="cmt" style="top:203px;width:83px"></div><div class="ct" style="top:207.80px">Bar length</div>
    <svg style="position:absolute;left:14px;top:230px" width="9" height="9"><rect x="0.5" y="0.5" width="8" height="8" fill="#fff" stroke="#000"/><rect x="2" y="4" width="5" height="1" fill="#000"/><rect x="4" y="2" width="1" height="5" fill="#000"/></svg>
    <div class="sepline"></div>
    <div class="lbl" style="top:247px;width:64px"></div><div class="lt" style="top:250px">Result:</div>
    <svg width="219" height="213" style="position:absolute;left:23px;top:275px">
<rect x="0.5" y="0.5" width="218" height="212" fill="#fff" stroke="#000" stroke-width="1.3"/>
<circle cx="109.75" cy="113.70" r="55.5" fill="none" stroke="#008000" stroke-width="1" shape-rendering="crispEdges"/>
<circle cx="136.50" cy="98.11" r="24.6" fill="#add8e6"/>
<path d="M108.02,8.75 L107.33,8.99 L106.64,9.30 L105.94,9.68 L105.24,10.15 L104.54,10.69 L103.84,11.31 L103.14,12.00 L102.43,12.77 L101.72,13.61 L101.00,14.53 L100.29,15.51 L99.56,16.57 L98.84,17.71 L98.10,18.91 L97.37,20.18 L96.62,21.51 L95.88,22.92 L95.12,24.39 L94.36,25.92 L93.60,27.52 L92.83,29.18 L92.05,30.90 L91.27,32.67 L90.48,34.51 L89.69,36.40 L88.89,38.34 L88.08,40.34 L87.27,42.39 L86.45,44.48 L85.63,46.63 L84.80,48.82 L83.97,51.05 L83.13,53.32 L82.28,55.64 L81.43,57.99 L80.58,60.37 L79.72,62.80 L78.86,65.25 L77.99,67.73 L77.12,70.24 L76.25,72.78 L75.37,75.34 L74.50,77.92 L73.62,80.52 L72.74,83.14 L71.86,85.77 L70.98,88.41 L70.10,91.07 L69.22,93.74 L68.35,96.41 L67.47,99.08 L66.60,101.76 L65.74,104.44 L64.88,107.12 L64.02,109.79 L63.17,112.45 L62.33,115.11 L61.49,117.76 L60.66,120.39 L59.85,123.01 L59.04,125.62 L58.24,128.20 L57.46,130.77 L56.68,133.31 L55.93,135.83 L55.18,138.32 L54.45,140.78 L53.74,143.21 L53.05,145.62 L52.37,147.98 L51.71,150.32 L51.08,152.61 L50.46,154.87 L49.87,157.09 L49.30,159.27 L48.75,161.40 L48.23,163.49 L47.73,165.53 L47.26,167.53 L46.82,169.48 L46.41,171.37 L46.03,173.22 L45.68,175.01 L45.36,176.76 L45.07,178.44 L44.81,180.07 L44.59,181.65 L44.41,183.17 L44.26,184.63 L44.14,186.03 L44.07,187.37 L44.03,188.66 L44.03,189.88 L44.07,191.04 L44.15,192.14 L44.27,193.18 L44.43,194.15 L44.64,195.06 L44.89,195.91 L45.18,196.70 L45.51,197.42 L45.89,198.08 L46.31,198.67 L46.78,199.21 L47.29,199.68 L47.85,200.08 L48.46,200.43 L49.11,200.71 L49.81,200.92 L50.55,201.08 L51.34,201.17 L52.18,201.21 L53.06,201.18 L53.99,201.09 L54.97,200.95 L55.99,200.74 L57.06,200.48 L58.18,200.16 L59.34,199.78 L60.55,199.35 L61.80,198.86 L63.10,198.32 L64.44,197.73 L65.83,197.08 L67.26,196.38 L68.73,195.64 L70.25,194.84 L71.81,194.00 L73.41,193.11 L75.04,192.18 L76.72,191.20 L78.44,190.18 L80.19,189.11 L81.98,188.01 L83.81,186.87 L85.67,185.69 L87.56,184.48 L89.49,183.23 L91.44,181.94 L93.43,180.63 L95.45,179.28 L97.49,177.91 L99.56,176.50 L101.65,175.07 L103.77,173.62 L105.91,172.14 L108.07,170.64 L110.25,169.12 L112.45,167.58 L114.66,166.03 L116.88,164.45 L119.12,162.87 L121.37,161.27 L123.63,159.65 L125.90,158.03 L128.17,156.40 L130.45,154.76 L132.73,153.11 L135.01,151.46 L137.29,149.80 L139.56,148.15 L141.83,146.49 L144.09,144.83 L146.35,143.17 L148.59,141.52 L150.83,139.87 L153.04,138.22 L155.24,136.58 L157.43,134.95 L159.59,133.33 L161.74,131.72 L163.85,130.11 L165.95,128.52 L168.01,126.94 L170.05,125.38 L172.06,123.83 L174.03,122.29 L175.97,120.78 L177.87,119.28 L179.74,117.79 L181.56,116.33 L183.35,114.88 L185.09,113.46 L186.78,112.05 L188.43,110.67 L190.04,109.31 L191.59,107.97 L193.09,106.65 L194.54,105.36 L195.93,104.09 L197.27,102.84 L198.56,101.62 L199.78,100.43 L200.95,99.26 L202.05,98.11 L203.09,96.99 L204.07,95.90 L204.99,94.83 L205.84,93.79 L206.63,92.77 L207.34,91.79 L207.99,90.82 L208.57,89.89 L209.09,88.98 L209.53,88.09 L209.90,87.23 L210.20,86.40 L210.22,86.32" fill="none" stroke="#ff0000" stroke-width="1" shape-rendering="crispEdges"/>
<line x1="136.50" y1="98.11" x2="210.22" y2="86.32" stroke="#0000ff" stroke-width="1" shape-rendering="crispEdges"/>
<circle cx="136.50" cy="98.11" r="3.9" fill="#0000ff"/>
<rect x="208.72" y="84.82" width="3" height="3" fill="#ff0000"/>
</svg>
  </div></div>
  <div class="hscroll"></div>
  <svg style="position:absolute;left:10px;top:498px" width="17" height="16">
    <rect x="0.75" y="0.75" width="15" height="14.5" fill="#f2f2f2" stroke="#5c5c5c" stroke-width="1.5"/>
    <rect x="6" y="1.5" width="1" height="13" fill="#a8a8a8"/><rect x="8" y="1.5" width="1" height="13" fill="#a8a8a8"/>
    <path d="M3,8 L5,6 V10 Z" fill="#6a6a6a"/><path d="M12,8 L10,6 V10 Z" fill="#6a6a6a"/>
  </svg>
  <svg style="position:absolute;left:30px;top:501px" width="9" height="9"><path d="M6.5,1 L2,4.5 L6.5,8" fill="none" stroke="#505050" stroke-width="2"/></svg>
  <div class="track" style="right:5px"></div>
  <div class="status"></div>
  <span class="calc" style="width:116px">Calculation: 1,922 sec.</span><span class="ver" style="left:165px">0.97.5890</span>
  <div class="sepv"></div>
</div>
<div class="frame"></div>
</body></html>
